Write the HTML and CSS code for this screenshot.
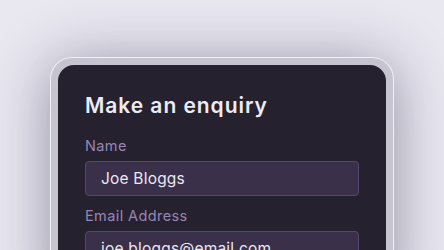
FILE: index.html
```html
<!DOCTYPE html>
<html lang="en">
<head>
    <meta charset="UTF-8">
    <meta name="viewport" content="width=device-width, initial-scale=1.0">
    <title>Make an enquiry</title>
    <link rel="stylesheet" href="styles.css">
</head>
<body>
    <div class="frame">
        <form class="card">
            <h1>Make an enquiry</h1>

            <label class="field">
                <span class="field-label">Name</span>
                <input class="field-input" type="text" value="Joe Bloggs">
            </label>

            <label class="field">
                <span class="field-label">Email Address</span>
                <input class="field-input" type="email" value="joe.bloggs@email.com">
            </label>
        </form>
    </div>
</body>
</html>
```

FILE: styles.css
```css
:root {
    --page-bg: #e9e8f1;
    --card-bg: #25212f;
    --title-color: #eeebf3;
    --label-color: #9986b6;
    --input-bg: #3a3049;
    --input-border: #57476f;
    --input-text: #ece7f3;
}

* {
    box-sizing: border-box;
    margin: 0;
    padding: 0;
}

html, body {
    height: 100%;
    overflow: hidden;
}

body {
    background-color: var(--page-bg);
    font-family: Inter, "Noto Sans", sans-serif;
    padding: 57px 50px 0;
}

.frame {
    width: 344px;
    height: 240px;
    padding: 7px 7px 0;
    border: 1px solid rgba(255, 255, 255, 0.75);
    border-bottom: none;
    border-radius: 22px 22px 0 0;
    background-color: #c6c4ce;
    box-shadow: 0 6px 60px rgba(40, 34, 62, 0.45);
}

.card {
    height: 100%;
    background-color: var(--card-bg);
    border-radius: 16px 16px 0 0;
    padding: 27px 27px 0;
}

h1 {
    color: var(--title-color);
    font-size: 21px;
    font-weight: 600;
    letter-spacing: 0.95px;
    line-height: 28px;
    margin-bottom: 17px;
}

.field {
    display: block;
    margin-bottom: 11px;
}

.field-label {
    display: block;
    color: var(--label-color);
    font-size: 14.5px;
    letter-spacing: 0.4px;
    line-height: 18px;
    margin-bottom: 6px;
}

.field-input {
    display: block;
    width: 100%;
    height: 35px;
    padding: 0 15px;
    background-color: var(--input-bg);
    border: 1px solid var(--input-border);
    border-radius: 4px;
    color: var(--input-text);
    font-family: inherit;
    font-size: 15.5px;
    letter-spacing: 0.2px;
    outline: none;
}
```
